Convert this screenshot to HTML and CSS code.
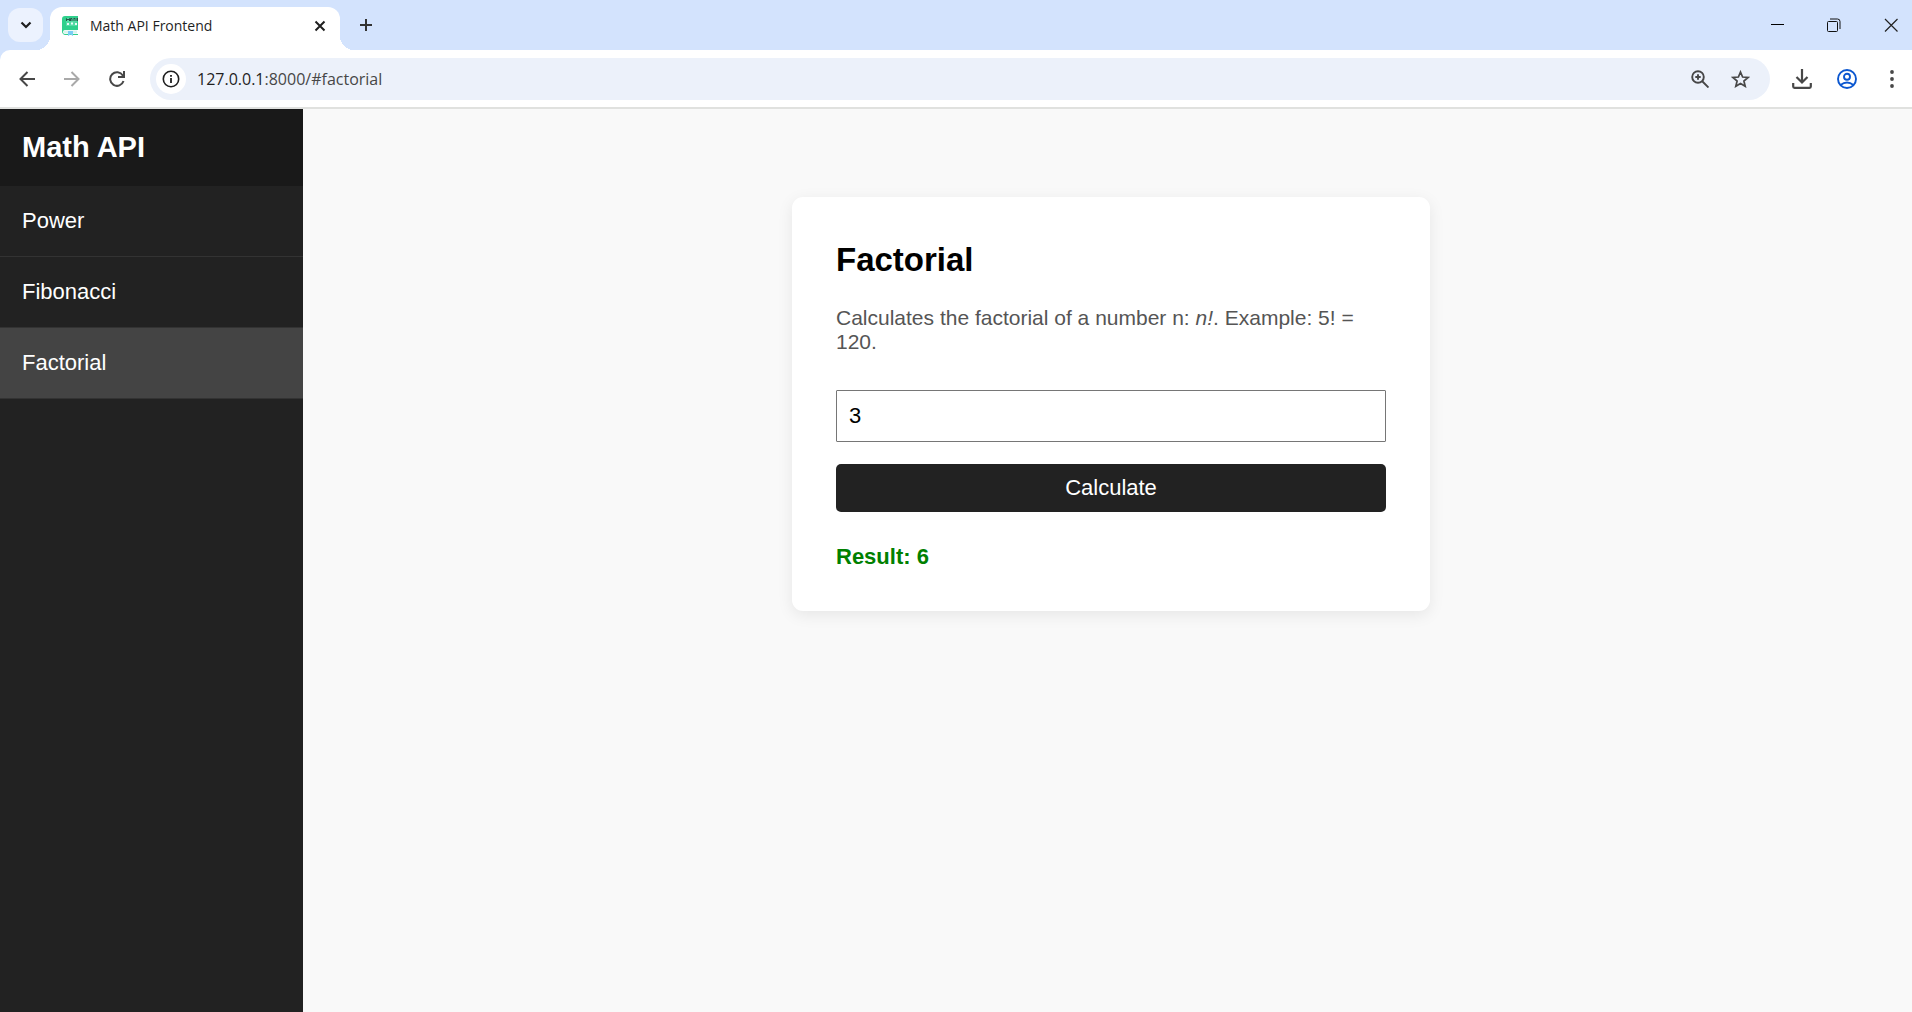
FILE: index.html
```html
<!DOCTYPE html>
<html lang="en">
<head>
<meta charset="utf-8">
<title>Math API Frontend</title>
<link rel="stylesheet" href="styles.css">
</head>
<body>
<header class="browser">
  <div class="tabstrip">
    <button class="tab-search" type="button" aria-label="Search tabs">
      <svg width="12" height="8" viewBox="0 0 12 8"><path d="M1.5 1.5 6 6l4.500-4.500" fill="none" stroke="#1f1f1f" stroke-width="2.200"/></svg>
    </button>
    <div class="tab">
      <svg class="favicon" width="20" height="20" viewBox="0 0 20 20">
        <path d="M4 0h13v14H4a2 2 0 0 0 0 4h13v1H4a4 4 0 0 1-3-4V3a3 3 0 0 1 3-3z" fill="#2fd08c"/>
        <path d="M4 14.500h12v3H4a1.500 1.500 0 0 1 0-3z" fill="#d9f3ee"/>
        <path d="M5 2h11v8H5z" fill="#54dba5"/>
        <path d="M5.500 5V2.500L7 4l1.500-1.500V5M9.500 5V2.500h1.500V5M12.500 2.500H14M13 2.500V5M15 2v3M16.500 2v3" fill="none" stroke="#24584a"/>
        <path d="M6 7h2v2H6zM10 6.500h2v2h-2zM14 7h2v2h-2z" fill="#e9fbf5"/>
        <path d="M7 15h5v5l-2.500-1.500L7 20z" fill="#79cdf4"/>
      </svg>
      <span class="tab-title">Math API Frontend</span>
      <button class="tab-close" type="button" aria-label="Close tab">
        <svg width="12" height="12" viewBox="0 0 12 12"><path d="m1.500 1.500 9 9m0-9-9 9" stroke="#1f1f1f" stroke-width="2"/></svg>
      </button>
    </div>
    <button class="new-tab" type="button" aria-label="New tab">
      <svg width="14" height="14" viewBox="0 0 14 14"><path d="M7 1v12M1 7h12" stroke="#333" stroke-width="2"/></svg>
    </button>
    <div class="window-controls">
      <button type="button" aria-label="Minimize"><svg width="14" height="14" viewBox="0 0 14 14"><path d="M1 6.500h13" stroke="#000"/></svg></button>
      <button type="button" aria-label="Restore"><svg width="14" height="14" viewBox="0 0 14 14" fill="none" stroke="#111"><rect x=".5" y="3.500" width="10" height="10" rx="1"/><path d="M3 1h7.500A2.500 2.500 0 0 1 13 3.500V11"/></svg></button>
      <button type="button" aria-label="Close"><svg width="14" height="14" viewBox="0 0 14 14"><path d="m1 1 12.500 12.500M13.500 1 1 13.500" stroke="#222" stroke-width="1.200"/></svg></button>
    </div>
  </div>
  <div class="toolbar">
    <button class="tool" type="button" aria-label="Back"><svg width="16" height="16" viewBox="0 0 16 16" fill="none" stroke="#474747" stroke-width="2"><path d="M16 8H2M8.500 1l-7 7 7 7"/></svg></button>
    <button class="tool" type="button" aria-label="Forward"><svg width="16" height="16" viewBox="0 0 16 16" fill="none" stroke="#a9a9a9" stroke-width="2"><path d="M0 8h14M7.500 1l7 7-7 7"/></svg></button>
    <button class="tool" type="button" aria-label="Reload"><svg width="16" height="16" viewBox="0 0 16 16" fill="none" stroke="#474747" stroke-width="2"><path d="M14.500 10A6.800 6.800 0 1 1 13.800 4.500L14.500 6M15 0v6H9"/></svg></button>
    <div class="omnibox">
      <button class="site-info" type="button" aria-label="Site information"><svg width="18" height="18" viewBox="0 0 18 18"><circle cx="9" cy="9" r="7.700" fill="none" stroke="#1f1f1f" stroke-width="1.600"/><path d="M9 8v5M9 5v1.800" stroke="#1f1f1f" stroke-width="1.800"/></svg></button>
      <div class="url"><span class="host">127.0.0.1</span>:8000/#factorial</div>
      <button class="tool" type="button" aria-label="Zoom"><svg width="18" height="18" viewBox="0 0 18 18" fill="none" stroke="#474747" stroke-width="1.900"><circle cx="7" cy="7" r="5.800"/><path d="m11 11 6.500 6.500M7 4.300v5.400M4.300 7h5.400"/></svg></button>
      <button class="tool" type="button" aria-label="Bookmark"><svg width="19" height="18" viewBox="0 0 19 18"><path d="m9.500 2 2.100 5 5.400.500-4.100 3.500 1.300 5.300-4.700-2.800-4.700 2.800 1.300-5.300L2 7.500 7.400 7z" fill="none" stroke="#474747" stroke-width="1.700"/></svg></button>
    </div>
    <button class="tool" type="button" aria-label="Downloads"><svg width="20" height="20" viewBox="0 0 20 20" fill="none" stroke="#474747" stroke-width="2.200"><path d="M10 0v13M4.500 8l5.500 5.500L15.500 8M1.200 14v3.500q0 1.300 1.300 1.300h15q1.300 0 1.300-1.300V14"/></svg></button>
    <button class="tool" type="button" aria-label="Profile"><svg width="20" height="20" viewBox="0 0 20 20" fill="none" stroke="#0b57d0" stroke-width="1.900"><circle cx="10" cy="10" r="9"/><circle cx="10" cy="7.800" r="3"/><path d="M3.500 16q6.500-5 13 0"/></svg></button>
    <button class="tool" type="button" aria-label="Menu"><svg width="4" height="18" viewBox="0 0 4 18" fill="#474747"><circle cx="2" cy="2" r="1.900"/><circle cx="2" cy="9" r="1.900"/><circle cx="2" cy="16" r="1.900"/></svg></button>
  </div>
</header>
<div class="app">
  <aside class="sidebar">
    <h1 class="brand">Math API</h1>
    <nav>
      <a class="nav-link" href="#power">Power</a>
      <a class="nav-link" href="#fibonacci">Fibonacci</a>
      <a class="nav-link active" href="#factorial" aria-current="page">Factorial</a>
    </nav>
  </aside>
  <main class="content">
    <form class="card">
      <h2 class="card-title">Factorial</h2>
      <p class="description" id="description">Calculates the factorial of a number n: <em>n!</em>. Example: 5! = 120.</p>
      <input class="number" type="text" inputmode="numeric" value="3" aria-label="n" aria-describedby="description">
      <button class="calculate" type="button">Calculate</button>
      <output class="result">Result: 6</output>
    </form>
  </main>
</div>
</body>
</html>
```
FILE: styles.css
```css
* { box-sizing: border-box; }

body {
  margin: 0;
  min-height: 100vh;
  display: flex;
  flex-direction: column;
  background: #f9f9f9;
  font-family: "Liberation Sans", Arial, sans-serif;
}

button {
  display: flex;
  align-items: center;
  justify-content: center;
  padding: 0;
  border: 0;
  background: none;
  font: inherit;
}

.browser {
  background: #d3e3fd;
  font-family: "Open Sans", "Noto Sans", sans-serif;
}

.tabstrip {
  display: flex;
  height: 50px;
  padding-left: 8px;
}

.tab-search {
  width: 35px;
  height: 34px;
  margin: 8px 7px 0 0;
  border-radius: 12px;
  background: #ecf2fe;
}

.tab {
  position: relative;
  display: flex;
  align-items: center;
  width: 290px;
  margin-top: 7px;
  padding: 0 13px 5px 11px;
  border-radius: 12px 12px 0 0;
  background: #fff;
}

.tab::before,
.tab::after {
  content: "";
  position: absolute;
  bottom: 0;
  width: 14px;
  height: 14px;
}

.tab::before {
  right: 100%;
  background: radial-gradient(circle at 0 0, transparent 14px, #fff 14px);
}

.tab::after {
  left: 100%;
  background: radial-gradient(circle at 100% 0, transparent 14px, #fff 14px);
}

.tab-title {
  flex: 1;
  margin-left: 9px;
  color: #1f1f1f;
  font-size: 14px;
  line-height: 20px;
}

.tab-close {
  width: 14px;
  height: 20px;
}

.new-tab {
  width: 28px;
  height: 28px;
  margin: 11px 0 0 12px;
}

.window-controls {
  display: flex;
  gap: 15px;
  height: 50px;
  margin-left: auto;
}

.window-controls button { width: 42px; }

.toolbar {
  display: flex;
  align-items: center;
  gap: 5px;
  height: 59px;
  padding-left: 7px;
  border-bottom: 2px solid #e0e1df;
  border-top-left-radius: 10px;
  background: #fff;
}

.tool {
  flex: none;
  width: 40px;
  height: 40px;
}

.omnibox {
  flex: 1;
  display: flex;
  align-items: center;
  height: 42px;
  margin: 0 7px 0 8px;
  padding: 0 10px 0 6px;
  border-radius: 21px;
  background: #ecf1fa;
}

.site-info {
  width: 30px;
  height: 30px;
  border-radius: 15px;
  background: #fff;
}

.url {
  flex: 1;
  margin-left: 11px;
  color: #474747;
  font-size: 16px;
  line-height: 24px;
}

.host { color: #1f1f1f; }

.app {
  flex: 1;
  display: flex;
}

.sidebar {
  flex: none;
  width: 303px;
  background: #222;
  color: #fff;
}

.brand {
  margin: 0;
  padding: 22px;
  background: #191919;
  font-size: 29px;
  line-height: 33px;
}

.nav-link {
  display: block;
  padding: 22px;
  border-bottom: 1px solid #333;
  color: #fff;
  font-size: 22px;
  line-height: 26px;
  text-decoration: none;
}

.nav-link.active { background: #444; }

.content {
  flex: 1;
  padding: 88px 0 44px 7px;
}

.card {
  display: flex;
  flex-direction: column;
  max-width: 638px;
  margin: 0 auto;
  padding: 44px 44px 42px;
  border-radius: 11px;
  background: #fff;
  box-shadow: 0 4px 16px rgba(0, 0, 0, 0.08);
}

.card-title {
  margin: 0 0 27px;
  font-size: 33px;
  line-height: 38px;
}

.description {
  margin: 0 0 36px;
  color: #555;
  font-size: 21px;
  line-height: 24px;
}

.number {
  width: 100%;
  height: 52px;
  padding: 0 12px;
  border: 1px solid #767676;
  border-radius: 1px;
  font: inherit;
  font-size: 22px;
}

.calculate {
  height: 48px;
  margin-top: 22px;
  border-radius: 5px;
  background: #222;
  color: #fff;
  font-size: 22px;
}

.result {
  margin-top: 33px;
  color: green;
  font-size: 22px;
  font-weight: bold;
  line-height: 24px;
}
```
